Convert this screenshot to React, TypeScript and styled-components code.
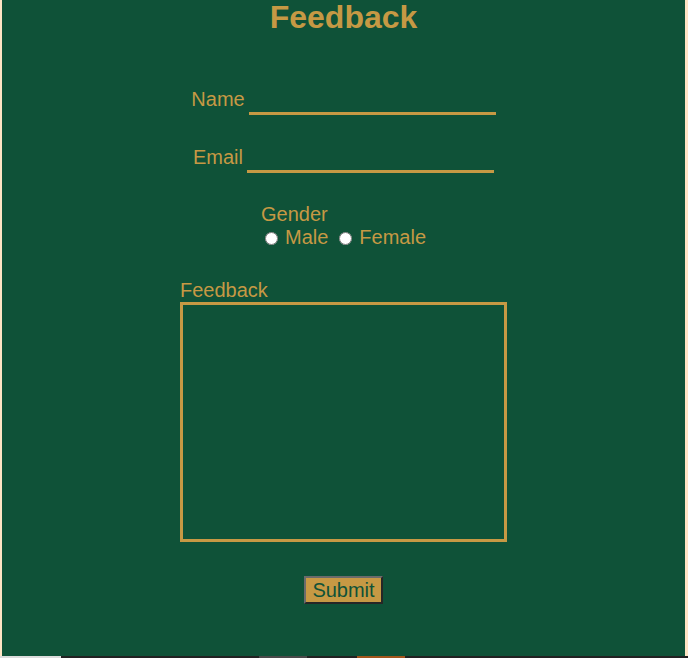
import styled, { createGlobalStyle } from 'styled-components';

const GOLD = '#c69944';
const GREEN = '#0f5238';

const GlobalStyle = createGlobalStyle`
  body {
    margin: 0;
    background-color: #ffe4c4;
    font-family: 'Liberation Sans', Arial, sans-serif;
  }
`;

const App = () => {
  return (
    <>
      <GlobalStyle />
      <Panel>
        <Title>Feedback</Title>
        <Form onSubmit={(e) => e.preventDefault()}>
          <FieldRow $top={52}>
            <Label htmlFor="name">Name</Label>
            <LineInput id="name" type="text" />
          </FieldRow>
          <FieldRow $top={28}>
            <Label htmlFor="email">Email</Label>
            <LineInput id="email" type="email" />
          </FieldRow>

          <GenderBlock>
            <Text>Gender</Text>
            <RadioRow>
              <Option>
                <Radio type="radio" name="gender" value="male" />
                Male
              </Option>
              <Option>
                <Radio type="radio" name="gender" value="female" />
                Female
              </Option>
            </RadioRow>
          </GenderBlock>

          <FeedbackBlock>
            <Label htmlFor="feedback">Feedback</Label>
            <TextArea id="feedback" />
          </FeedbackBlock>

          <SubmitButton type="submit">Submit</SubmitButton>
        </Form>
      </Panel>
      <Footer>
        <FooterLead />
        <FooterBar>
          <FooterTab $tone="#4a4a4a" />
          <FooterTab $tone="#a3561d" />
        </FooterBar>
      </Footer>
    </>
  );
};

export default App;

const Panel = styled.div`
  height: 656px;
  margin: 0 3px 0 2px;
  background-color: ${GREEN};
  color: ${GOLD};
  overflow: hidden;
`;

const Title = styled.h1`
  margin: 0;
  padding-top: 1px;
  font-size: 32px;
  line-height: 32px;
  font-weight: 700;
  text-align: center;
`;

const Form = styled.form`
  display: flex;
  flex-direction: column;
  align-items: center;
  font-size: 20px;
`;

const FieldRow = styled.div<{ $top: number }>`
  display: flex;
  align-items: flex-end;
  gap: 4px;
  height: 30px;
  margin-top: ${(p) => p.$top}px;
`;

const Label = styled.label`
  display: block;
  line-height: 23px;
  padding-bottom: 4px;
`;

const Text = styled.div`
  line-height: 23px;
`;

const LineInput = styled.input`
  box-sizing: border-box;
  width: 247px;
  height: 26px;
  padding: 0 2px;
  border: none;
  border-bottom: 3px solid ${GOLD};
  background: transparent;
  color: ${GOLD};
  font: inherit;
  outline: none;
`;

const GenderBlock = styled.div`
  margin-top: 30px;
  display: flex;
  flex-direction: column;
`;

const RadioRow = styled.div`
  display: flex;
  align-items: center;
  gap: 7px;
  line-height: 23px;
`;

const Option = styled.label`
  display: flex;
  align-items: center;
`;

const Radio = styled.input`
  width: 13px;
  height: 13px;
  margin: 1px 7px 0 4px;
`;

const FeedbackBlock = styled.div`
  margin-top: 30px;
  display: flex;
  flex-direction: column;

  label {
    padding-bottom: 0;
    margin-bottom: 0;
  }
`;

const TextArea = styled.textarea`
  box-sizing: border-box;
  width: 327px;
  height: 240px;
  border: 3px solid ${GOLD};
  background: transparent;
  color: ${GOLD};
  font: inherit;
  resize: none;
  outline: none;
`;

const SubmitButton = styled.button`
  box-sizing: border-box;
  margin-top: 34px;
  height: 28px;
  padding: 0 6px;
  background-color: ${GOLD};
  color: ${GREEN};
  font: inherit;
  line-height: 22px;
  border-style: solid;
  border-width: 2px;
  border-color: #6b6b6b #262626 #262626 #6b6b6b;
  cursor: pointer;
`;

const Footer = styled.div`
  display: flex;
  height: 40px;
`;

const FooterLead = styled.div`
  width: 61px;
  background-color: #dcdcdc;
`;

const FooterBar = styled.div`
  flex: 1;
  display: flex;
  gap: 50px;
  padding-left: 198px;
  background-color: #222222;
`;

const FooterTab = styled.div<{ $tone: string }>`
  width: 48px;
  background-color: ${(p) => p.$tone};
`;
